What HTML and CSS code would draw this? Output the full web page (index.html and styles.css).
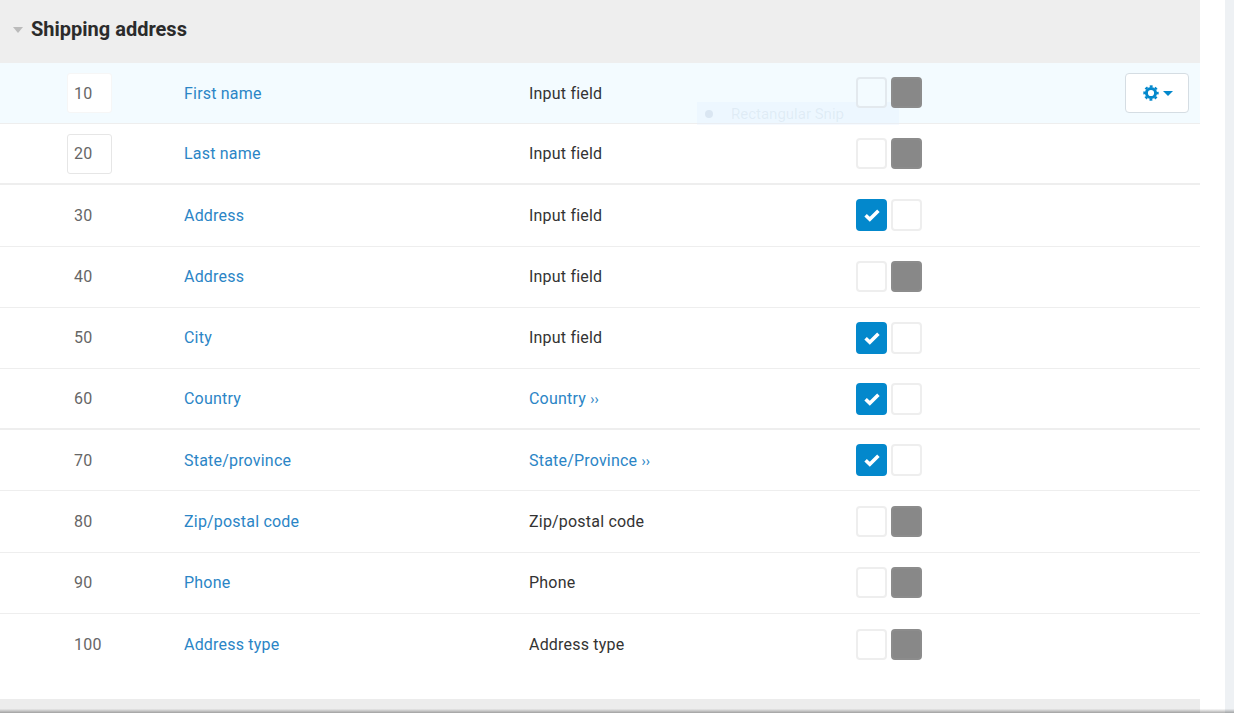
FILE: index.html
```html
<!DOCTYPE html>
<html lang="en">
<head>
    <meta charset="UTF-8">
    <meta name="viewport" content="width=device-width, initial-scale=1.0">
    <title>Shipping address</title>
    <link rel="stylesheet" href="styles.css">
</head>
<body>

<div class="page">
    <div class="main">
        <div class="section-head">
            <span class="head-caret"></span>
            <h2>Shipping address</h2>
        </div>

        <div class="rows">
            <div class="row row-hover">
                <div class="pos"><input class="pos-input" value="10"></div>
                <a class="link">First name</a>
                <span class="type">Input field</span>
                <div class="toggle off"><span class="yes"></span><span class="no"></span></div>
                <button class="tools">
                    <svg class="gear" viewBox="0 0 16 16" width="16" height="16">
                        <circle cx="8" cy="8" r="4.6" fill="none" stroke="#0388cc" stroke-width="3"/>
                        <circle cx="8" cy="8" r="6.7" fill="none" stroke="#0388cc" stroke-width="2" stroke-dasharray="2.9 2.36" stroke-dashoffset="1.45"/>
                    </svg>
                    <span class="tools-caret"></span>
                </button>
            </div>
            <div class="row row-thick">
                <div class="pos"><input class="pos-input" value="20"></div>
                <a class="link">Last name</a>
                <span class="type">Input field</span>
                <div class="toggle off"><span class="yes"></span><span class="no"></span></div>
            </div>
            <div class="row">
                <div class="pos"><span class="pos-text">30</span></div>
                <a class="link">Address</a>
                <span class="type">Input field</span>
                <div class="toggle on">
                    <span class="yes"><svg viewBox="0 0 16 16" width="16" height="16"><polyline points="1.6,8.2 5.8,12.2 14.4,3.8" fill="none" stroke="#fff" stroke-width="3.6"/></svg></span>
                    <span class="no"></span>
                </div>
            </div>
            <div class="row">
                <div class="pos"><span class="pos-text">40</span></div>
                <a class="link">Address</a>
                <span class="type">Input field</span>
                <div class="toggle off"><span class="yes"></span><span class="no"></span></div>
            </div>
            <div class="row">
                <div class="pos"><span class="pos-text">50</span></div>
                <a class="link">City</a>
                <span class="type">Input field</span>
                <div class="toggle on">
                    <span class="yes"><svg viewBox="0 0 16 16" width="16" height="16"><polyline points="1.6,8.2 5.8,12.2 14.4,3.8" fill="none" stroke="#fff" stroke-width="3.6"/></svg></span>
                    <span class="no"></span>
                </div>
            </div>
            <div class="row row-thick">
                <div class="pos"><span class="pos-text">60</span></div>
                <a class="link">Country</a>
                <a class="link">Country <span class="more">››</span></a>
                <div class="toggle on">
                    <span class="yes"><svg viewBox="0 0 16 16" width="16" height="16"><polyline points="1.6,8.2 5.8,12.2 14.4,3.8" fill="none" stroke="#fff" stroke-width="3.6"/></svg></span>
                    <span class="no"></span>
                </div>
            </div>
            <div class="row">
                <div class="pos"><span class="pos-text">70</span></div>
                <a class="link">State/province</a>
                <a class="link">State/Province <span class="more">››</span></a>
                <div class="toggle on">
                    <span class="yes"><svg viewBox="0 0 16 16" width="16" height="16"><polyline points="1.6,8.2 5.8,12.2 14.4,3.8" fill="none" stroke="#fff" stroke-width="3.6"/></svg></span>
                    <span class="no"></span>
                </div>
            </div>
            <div class="row">
                <div class="pos"><span class="pos-text">80</span></div>
                <a class="link">Zip/postal code</a>
                <span class="type">Zip/postal code</span>
                <div class="toggle off"><span class="yes"></span><span class="no"></span></div>
            </div>
            <div class="row">
                <div class="pos"><span class="pos-text">90</span></div>
                <a class="link">Phone</a>
                <span class="type">Phone</span>
                <div class="toggle off"><span class="yes"></span><span class="no"></span></div>
            </div>
            <div class="row row-last">
                <div class="pos"><span class="pos-text">100</span></div>
                <a class="link">Address type</a>
                <span class="type">Address type</span>
                <div class="toggle off"><span class="yes"></span><span class="no"></span></div>
            </div>
        </div>

        <div class="next-section"></div>
    </div>
    <div class="side-strip"></div>
</div>

<!-- faint tooltip left over on the screen -->
<div class="ghost"><span class="ghost-dot"></span><span class="ghost-text">Rectangular Snip</span></div>
<div class="bottom-shade"></div>

</body>
</html>
```

FILE: styles.css
```css
:root {
    --link-color: #2b85c6;
    --text-color: #333;
    --blue: #0388cc;
    --gray: #888;
    --line: #eee;
}

html, body {
    height: 100%;
}

body {
    font-family: Roboto, 'Liberation Sans', sans-serif;
    font-size: 16px;
    letter-spacing: 0.2px;
    color: var(--text-color);
    background: #fff;
    margin: 0;
    overflow: hidden;
}

.page {
    display: flex;
    height: 100vh;
}

.main {
    width: 1200px;
    flex: none;
}

.side-strip {
    width: 9px;
    margin-left: 25px;
    background: #eef1f4;
}

.section-head {
    height: 63px;
    background: #eee;
    display: flex;
    align-items: center;
    padding-left: 13px;
    box-sizing: border-box;
}

.section-head h2 {
    font-size: 20px;
    font-weight: 700;
    letter-spacing: 0;
    color: #2b2b2b;
    margin: 0 0 5px 8px;
}

.head-caret {
    width: 0;
    height: 0;
    border-left: 5.5px solid transparent;
    border-right: 5.5px solid transparent;
    border-top: 6px solid #bbb;
    margin-bottom: 3px;
}

.rows {
    height: 636px;
}

.row {
    display: grid;
    grid-template-columns: 184px 345px 327px 66px 1fr;
    align-items: center;
    height: 61.2px;
    box-sizing: border-box;
    border-bottom: 1px solid var(--line);
}

.row-thick {
    border-bottom-width: 2px;
}

.row-last {
    border-bottom: none;
}

.row-hover {
    background: #f3fbff;
}

.pos {
    padding-left: 67px;
    color: #666;
}

.pos-text {
    padding-left: 7px;
}

.pos-input {
    display: block;
    width: 45px;
    height: 40px;
    box-sizing: border-box;
    padding: 0 6px;
    border: 1px solid #e6e6e6;
    border-radius: 3px;
    background: #fff;
    font-family: inherit;
    font-size: 16px;
    letter-spacing: 0.2px;
    color: #666;
}

.row-hover .pos-input {
    border-color: #f6f6f6;
}

.link {
    color: var(--link-color);
    text-decoration: none;
}

.more {
    font-size: 14px;
}

.toggle {
    display: flex;
    gap: 4px;
    position: relative;
    z-index: 1;
}

.toggle span {
    display: flex;
    align-items: center;
    justify-content: center;
    width: 31px;
    height: 31px;
    box-sizing: border-box;
    border-radius: 4px;
    border: 2px solid #eee;
    background: #fff;
}

.toggle.on span {
    height: 32px;
}

.toggle.off .no {
    background: var(--gray);
    border-color: #8c8c8c;
}

.toggle.on .yes {
    background: var(--blue);
    border-color: var(--blue);
}

.row-hover .toggle {
    margin-top: -1px;
}

.row-hover .toggle.off .yes {
    background: #f3fbff;
    border-color: #e3e9ee;
}

.tools {
    justify-self: end;
    margin-right: 11px;
    width: 64px;
    height: 40px;
    display: flex;
    align-items: center;
    justify-content: center;
    gap: 4px;
    padding: 0 0 0 2px;
    background: #fff;
    border: 1px solid #d5dde3;
    border-radius: 4px;
}

.tools-caret {
    width: 0;
    height: 0;
    border-left: 5px solid transparent;
    border-right: 5px solid transparent;
    border-top: 5px solid var(--blue);
}

.next-section {
    height: 14px;
    background: #ececec;
}

.ghost {
    position: absolute;
    left: 697px;
    top: 102px;
    width: 202px;
    height: 23px;
    display: flex;
    align-items: center;
    background: rgba(225, 240, 255, 0.3);
    font-size: 15px;
    letter-spacing: 0;
    color: rgba(150, 175, 195, 0.16);
}

.ghost-dot {
    width: 8px;
    height: 8px;
    border-radius: 50%;
    background: rgba(150, 175, 195, 0.22);
    margin: 0 18px 0 8px;
}

.bottom-shade {
    position: absolute;
    left: 0;
    right: 0;
    bottom: 0;
    height: 4px;
    background: linear-gradient(to bottom, rgba(0, 0, 0, 0.02), rgba(0, 0, 0, 0.32));
}
```
